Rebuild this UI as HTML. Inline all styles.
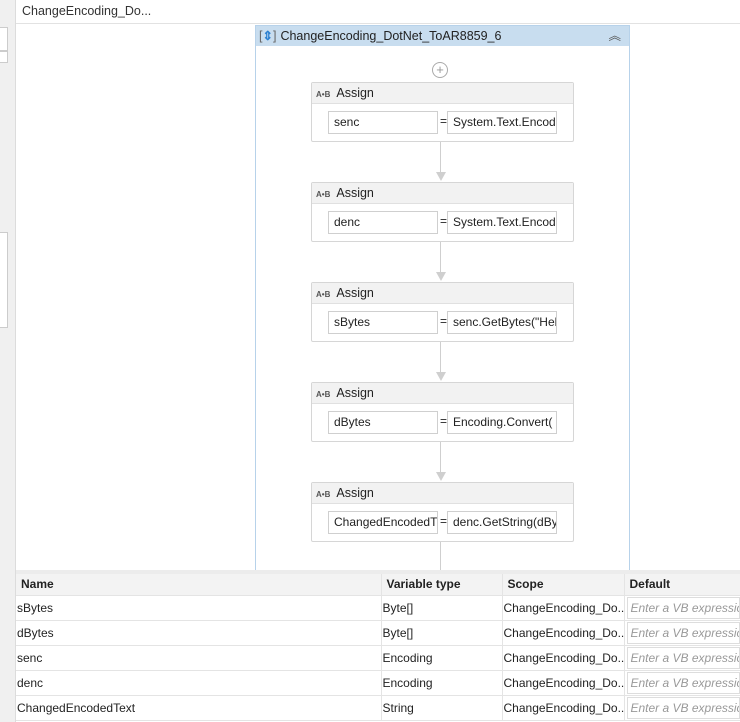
<!DOCTYPE html><html><head><style>
body{margin:0;width:740px;height:722px;position:relative;overflow:hidden;background:#fff;font-family:"Liberation Sans",sans-serif;font-size:12px;color:#222}
.a{position:absolute}
.blk{position:absolute;left:311px;width:261px;height:58px;border:1px solid #d6d6d6;border-radius:2px;background:#fff}
.blk .h{height:20px;background:#f2f2f2;border-bottom:1px solid #e0e0e0;line-height:20px;font-size:12.5px}
.blk .h b{font-size:8px;color:#555;margin:0 6px 0 4px}
.in{position:absolute;top:28px;height:21px;border:1px solid #cfcfcf;background:#fff;line-height:21px;padding-left:5px;font-size:12px;overflow:hidden;white-space:nowrap}
.ln{position:absolute;left:440px;width:1px;background:#cfcfcf}
.ar{position:absolute;left:436px;width:0;height:0;border-left:5px solid transparent;border-right:5px solid transparent;border-top:9px solid #cfcfcf}
table{position:absolute;left:16px;top:574px;border-collapse:collapse;width:724px;font-size:12px;table-layout:fixed}
td,th{height:24px;border-bottom:1px solid #e4e4e4;border-right:1px solid #e4e4e4;padding:0 0 0 1px;text-align:left;white-space:nowrap;overflow:hidden;box-sizing:border-box}
th{background:#f3f3f3;font-weight:bold;padding-left:5px;height:21px}
td.d{padding:1px 0 1px 2px}
td.d div{border:1px solid #ddd;height:20px;line-height:20px;color:#999;font-style:italic;padding-left:3px;overflow:hidden;box-sizing:border-box;height:22px}
</style></head><body>
<div class="a" style="left:0;top:0;width:15px;height:722px;background:#f0f0f0;border-right:1px solid #dcdcdc"></div>
<div class="a" style="left:0;top:27px;width:7px;height:22px;background:#fff;border:1px solid #ccc;border-left:none"></div>
<div class="a" style="left:0;top:51px;width:7px;height:10px;background:#fff;border:1px solid #ccc;border-left:none"></div>
<div class="a" style="left:0;top:232px;width:7px;height:94px;background:#fff;border:1px solid #ccc;border-left:none"></div>
<div class="a" style="left:16px;top:0;width:724px;height:23px;border-bottom:1px solid #e2e2e2;line-height:23px;padding-left:6px;font-size:12.5px;color:#333">ChangeEncoding_Do...</div>
<div class="a" style="left:255px;top:25px;width:373px;height:545px;border:1px solid #b7d2ea;border-bottom:none"></div>
<div class="a" style="left:256px;top:26px;width:373px;height:20px;background:#c8ddef;line-height:20px;font-size:12.5px">
<span style="color:#666;margin:0 4px 0 3px">[<span style="color:#2a7fd0;font-weight:bold">⇕</span>]</span>ChangeEncoding_DotNet_ToAR8859_6<span style="position:absolute;right:8px;top:0;color:#555">︽</span></div>
<div class="a" style="left:432px;top:62px;width:14px;height:14px;border:1px solid #aaa;border-radius:50%;text-align:center;line-height:14px;color:#999;font-size:13px">+</div>

<div class="blk" style="top:82px"><div class="h"><b>A•B</b>Assign</div><div class="in" style="left:16px;width:103px">senc</div><span class="a" style="left:128px;top:31px">=</span><div class="in" style="left:135px;width:103px">System.Text.Encodi</div></div>
<div class="ln" style="top:142px;height:30px"></div><div class="ar" style="top:172px"></div>
<div class="blk" style="top:182px"><div class="h"><b>A•B</b>Assign</div><div class="in" style="left:16px;width:103px">denc</div><span class="a" style="left:128px;top:31px">=</span><div class="in" style="left:135px;width:103px">System.Text.Encodi</div></div>
<div class="ln" style="top:242px;height:30px"></div><div class="ar" style="top:272px"></div>
<div class="blk" style="top:282px"><div class="h"><b>A•B</b>Assign</div><div class="in" style="left:16px;width:103px">sBytes</div><span class="a" style="left:128px;top:31px">=</span><div class="in" style="left:135px;width:103px">senc.GetBytes("Hel</div></div>
<div class="ln" style="top:342px;height:30px"></div><div class="ar" style="top:372px"></div>
<div class="blk" style="top:382px"><div class="h"><b>A•B</b>Assign</div><div class="in" style="left:16px;width:103px">dBytes</div><span class="a" style="left:128px;top:31px">=</span><div class="in" style="left:135px;width:103px">Encoding.Convert(</div></div>
<div class="ln" style="top:442px;height:30px"></div><div class="ar" style="top:472px"></div>
<div class="blk" style="top:482px"><div class="h"><b>A•B</b>Assign</div><div class="in" style="left:16px;width:103px">ChangedEncodedT</div><span class="a" style="left:128px;top:31px">=</span><div class="in" style="left:135px;width:103px">denc.GetString(dBy</div></div>
<div class="ln" style="top:542px;height:28px"></div>

<div class="a" style="left:16px;top:570px;width:724px;height:4px;background:#ececec"></div>
<table>
<colgroup><col style="width:365px"><col style="width:121px"><col style="width:122px"><col style="width:116px"></colgroup>
<tr><th>Name</th><th>Variable type</th><th>Scope</th><th>Default</th></tr>
<tr><td>sBytes</td><td>Byte[]</td><td>ChangeEncoding_Do...</td><td class="d"><div>Enter a VB expression</div></td></tr>
<tr><td>dBytes</td><td>Byte[]</td><td>ChangeEncoding_Do...</td><td class="d"><div>Enter a VB expression</div></td></tr>
<tr><td>senc</td><td>Encoding</td><td>ChangeEncoding_Do...</td><td class="d"><div>Enter a VB expression</div></td></tr>
<tr><td>denc</td><td>Encoding</td><td>ChangeEncoding_Do...</td><td class="d"><div>Enter a VB expression</div></td></tr>
<tr><td>ChangedEncodedText</td><td>String</td><td>ChangeEncoding_Do...</td><td class="d"><div>Enter a VB expression</div></td></tr>
</table>
</body></html>
